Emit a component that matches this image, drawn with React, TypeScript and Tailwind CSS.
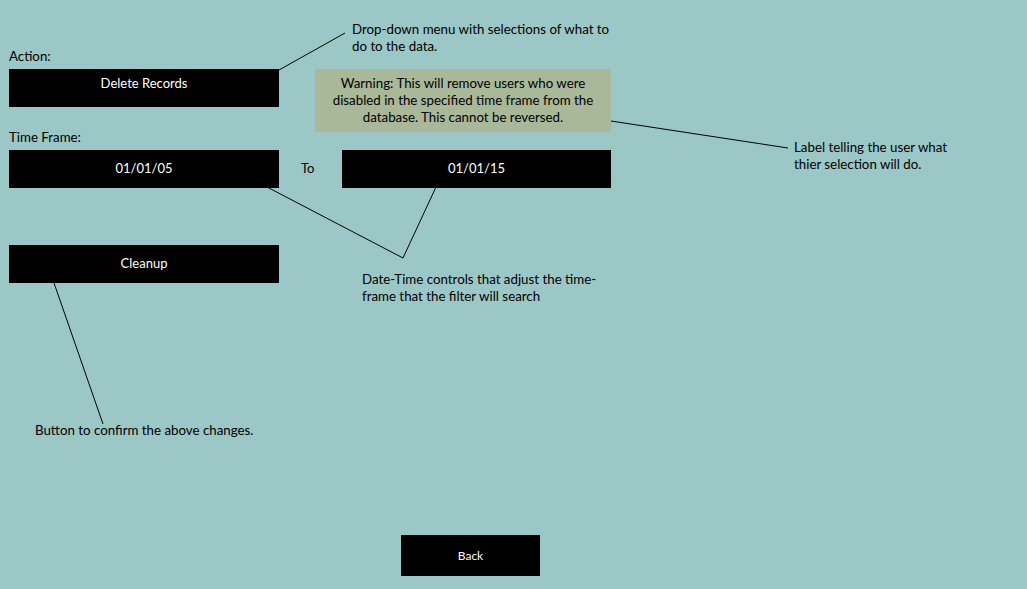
const font = { fontFamily: "Lato, 'Liberation Sans', sans-serif" };

function BlackBox({ label, className = "" }: { label: string; className?: string }) {
  return (
    <div
      className={`flex h-[38px] items-center justify-center bg-black text-[13px] text-white ${className}`}
    >
      {label}
    </div>
  );
}

function Note({ className, children }: { className: string; children: React.ReactNode }) {
  return (
    <p className={`absolute text-[13.3px] leading-[17px] text-black ${className}`}>{children}</p>
  );
}

export default function App() {
  return (
    <main
      style={font}
      className="relative h-[589px] w-[1027px] overflow-hidden bg-[#9bc7c6] text-black"
    >
      <div className="flex h-full flex-col pl-[9px] pt-[48px]">
        <div className="flex items-start">
          <div className="flex w-[270px] flex-col">
            <p className="h-[21px] text-[13.3px] leading-[16px]">Action:</p>
            <BlackBox label="Delete Records" className="pb-[8px]" />
            <p className="mt-[22px] h-[21px] text-[13.3px] leading-[16px]">Time Frame:</p>
          </div>
          <div className="ml-[36px] mt-[21px] flex h-[63px] w-[296px] items-center justify-center bg-[#a9b899] text-center text-[13.3px] leading-[17px]">
            <p>
              Warning: This will remove users who were
              <br />
              disabled in the specified time frame from the
              <br />
              database. This cannot be reversed.
            </p>
          </div>
        </div>

        <div className="flex items-center">
          <BlackBox label="01/01/05" className="w-[270px]" />
          <span className="w-[63px] pl-[22px] text-[13px]">To</span>
          <BlackBox label="01/01/15" className="w-[269px]" />
        </div>

        <BlackBox label="Cleanup" className="mt-[57px] w-[270px]" />

        <button className="mb-[13px] ml-[392px] mt-auto flex h-[41px] w-[139px] items-center justify-center bg-black text-[12px] text-white">
          Back
        </button>
      </div>

      <svg
        className="pointer-events-none absolute inset-0"
        width="1027"
        height="589"
        viewBox="0 0 1027 589"
      >
        <g stroke="#000" strokeWidth="1" fill="none">
          <line x1="279" y1="70" x2="345" y2="33" />
          <line x1="611" y1="121" x2="788" y2="148" />
          <line x1="267" y1="187" x2="403" y2="258" />
          <line x1="436" y1="187" x2="403" y2="258" />
          <line x1="54" y1="283" x2="103" y2="424" />
        </g>
      </svg>

      <Note className="left-[352px] top-[21px]">
        Drop-down menu with selections of what to
        <br />
        do to the data.
      </Note>
      <Note className="left-[794px] top-[139px]">
        Label telling the user what
        <br />
        thier selection will do.
      </Note>
      <Note className="left-[362px] top-[271px]">
        Date-Time controls that adjust the time-
        <br />
        frame that the filter will search
      </Note>
      <Note className="left-[35px] top-[422px]">Button to confirm the above changes.</Note>
    </main>
  );
}
